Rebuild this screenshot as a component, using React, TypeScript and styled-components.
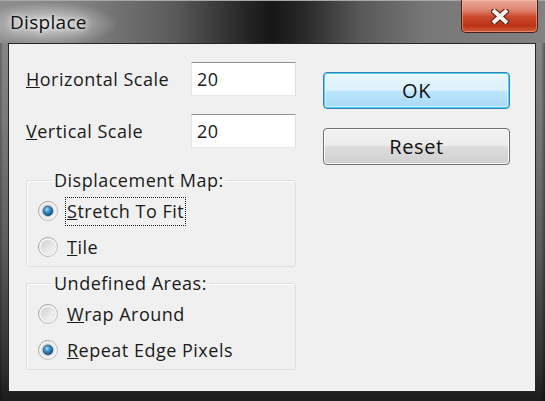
import React from "react";
import styled, { createGlobalStyle } from "styled-components";

const Global = createGlobalStyle`
  html, body { margin: 0; padding: 0; background: #2a2a2a; }
  body { font-family: "Open Sans", "Noto Sans", "DejaVu Sans", sans-serif; }
  * { box-sizing: border-box; }
`;

const Window = styled.div`
  width: 545px;
  height: 401px;
  display: flex;
  flex-direction: column;
  overflow: hidden;
  background:
    linear-gradient(to right, rgba(0,0,0,0.25) 0, rgba(0,0,0,0) 3px, rgba(0,0,0,0) calc(100% - 4px), rgba(0,0,0,0.35) 100%),
    linear-gradient(to bottom, #8c8c8c 0, #7a7a7a 30%, #5e5e5e 60%, #2e2e2e 92%, #1c1c1c 100%);
`;

const TitleBar = styled.div`
  height: 43px;
  flex: none;
  display: flex;
  align-items: flex-start;
  justify-content: space-between;
  padding: 0 7px 0 10px;
  border-top: 1px solid #a8a8a8;
  background:
    radial-gradient(ellipse 70px 22px at 48px 23px, rgba(235,235,235,0.75), rgba(235,235,235,0) 100%),
    linear-gradient(to right, #8e8e8e 0, #838383 14%, #5a5a5a 32%, #262626 45%, #161616 50%, #2a2a2a 56%, #585858 66%, #777 78%, #828282 100%);
`;

const Title = styled.div`
  margin-top: 8px;
  font-size: 19px;
  line-height: 26px;
  letter-spacing: 0.3px;
  color: #101010;
  text-shadow: 0 0 8px rgba(255,255,255,0.9), 0 0 4px rgba(255,255,255,0.8);
`;

const CloseButton = styled.div`
  width: 77px;
  height: 33px;
  margin-top: -1px;
  display: flex;
  align-items: center;
  justify-content: center;
  border: 1px solid #4a1e16;
  border-top: none;
  border-radius: 0 0 5px 5px;
  box-shadow: inset 0 0 0 1px rgba(255,200,180,0.45);
  background: linear-gradient(to bottom, #eaa898 0, #de8672 30%, #cb4a2e 52%, #bb3418 80%, #d4583a 100%);
`;

const Client = styled.div`
  flex: 1;
  margin: 0 9px 9px 8px;
  border: 1px solid #262626;
  background: #f0f0f0;
  display: grid;
  grid-template-columns: 270px 187px;
  column-gap: 27px;
  align-items: start;
  padding: 18px 0 0 17px;
  color: #1a1a1a;
  font-size: 18px;
  letter-spacing: 0.5px;
`;

const LeftColumn = styled.div`
  display: flex;
  flex-direction: column;
`;

const FieldRow = styled.div<{ $gap?: number }>`
  display: flex;
  align-items: center;
  justify-content: space-between;
  height: 34px;
  margin-bottom: ${(p) => p.$gap ?? 0}px;
`;

const Label = styled.span`
  line-height: 24px;
`;

const TextInput = styled.input`
  width: 105px;
  height: 34px;
  border: 1px solid #abadb3;
  border-top-color: #8e9096;
  border-left-color: #e2e3ea;
  border-right-color: #dbdfe6;
  border-bottom-color: #e3e9ef;
  background: #fff;
  font: inherit;
  font-size: 18px;
  letter-spacing: 0.5px;
  color: #1a1a1a;
  padding: 0 5px;
  outline: none;
`;

const Group = styled.fieldset<{ $top: number }>`
  margin: ${(p) => p.$top}px 0 0 0;
  padding: 1px 0 1px 11px;
  border: 1px solid #dcdfe2;
  border-radius: 3px;
  box-shadow: inset 1px 1px 0 #fff;
  min-width: 0;
`;

const Legend = styled.legend`
  margin-left: 13px;
  padding: 0 3px;
  line-height: 24px;
  font-size: 18px;
`;

const RadioRow = styled.div`
  height: 36px;
  display: flex;
  align-items: center;
  gap: 8px;
`;

const RadioText = styled.span<{ $focused?: boolean }>`
  line-height: 27px;
  padding: 0 1px;
  outline: ${(p) => (p.$focused ? "1px dotted #222" : "none")};
  outline-offset: 0;
`;

const RightColumn = styled.div`
  display: flex;
  flex-direction: column;
  gap: 19px;
  padding-top: 10px;
`;

const Button = styled.div<{ $default?: boolean }>`
  height: 37px;
  display: flex;
  align-items: center;
  justify-content: center;
  border-radius: 4px;
  font-size: 20px;
  letter-spacing: 0.6px;
  color: #111;
  border: 1px solid ${(p) => (p.$default ? "#3c7fb1" : "#707070")};
  box-shadow: ${(p) =>
    p.$default
      ? "inset 0 0 0 1px #48d3fa, inset 0 0 0 2px rgba(255,255,255,0.5)"
      : "inset 0 0 0 1px rgba(255,255,255,0.85)"};
  background: ${(p) =>
    p.$default
      ? "linear-gradient(to bottom, #eaf6fd 0, #d9f0fc 50%, #bee6fd 50%, #a7d9f5 100%)"
      : "linear-gradient(to bottom, #f2f2f2 0, #ebebeb 50%, #dddddd 50%, #cfcfcf 100%)"};
`;

const Radio = ({ checked, id }: { checked?: boolean; id: string }) => (
  <svg width="20" height="20" viewBox="0 0 20 20" style={{ flex: "none" }}>
    <defs>
      <linearGradient id={`ring-${id}`} x1="0" y1="0" x2="1" y2="1">
        <stop offset="0" stopColor="#9a9a9a" />
        <stop offset="1" stopColor="#c9c9c9" />
      </linearGradient>
      <linearGradient id={`in-${id}`} x1="0" y1="0" x2="1" y2="1">
        <stop offset="0" stopColor="#cfcfcf" />
        <stop offset="1" stopColor="#fafafa" />
      </linearGradient>
      <radialGradient id={`dot-${id}`} cx="0.4" cy="0.35" r="0.65">
        <stop offset="0" stopColor="#9fdcf8" />
        <stop offset="0.45" stopColor="#3a8ec6" />
        <stop offset="1" stopColor="#144e7e" />
      </radialGradient>
    </defs>
    <circle cx="10" cy="10" r="9.5" fill="#f4f4f4" stroke={`url(#ring-${id})`} strokeWidth="1" />
    <circle cx="10" cy="10" r="7" fill={`url(#in-${id})`} stroke="#e6e6e6" strokeWidth="0.8" />
    {checked && <circle cx="10" cy="10" r="5" fill={`url(#dot-${id})`} stroke="#1c4c72" strokeWidth="0.6" />}
  </svg>
);

const CloseGlyph = () => (
  <svg width="18" height="15" viewBox="0 0 18 15">
    <path d="M3.5 2.5 L14.5 12.5 M14.5 2.5 L3.5 12.5" stroke="#5a2418" strokeWidth="6.4" strokeLinecap="square" />
    <path d="M3.5 2.5 L14.5 12.5 M14.5 2.5 L3.5 12.5" stroke="#fbf3f0" strokeWidth="4" strokeLinecap="square" />
  </svg>
);

export default function App() {
  return (
    <>
      <Global />
      <Window>
        <TitleBar>
          <Title>Displace</Title>
          <CloseButton>
            <CloseGlyph />
          </CloseButton>
        </TitleBar>
        <Client>
          <LeftColumn>
            <FieldRow $gap={18}>
              <Label>
                <u>H</u>orizontal Scale
              </Label>
              <TextInput defaultValue="20" />
            </FieldRow>
            <FieldRow>
              <Label>
                <u>V</u>ertical Scale
              </Label>
              <TextInput defaultValue="20" />
            </FieldRow>
            <Group $top={20}>
              <Legend>Displacement Map:</Legend>
              <RadioRow>
                <Radio checked id="a" />
                <RadioText $focused>
                  <u>S</u>tretch To Fit
                </RadioText>
              </RadioRow>
              <RadioRow>
                <Radio id="b" />
                <RadioText>
                  <u>T</u>ile
                </RadioText>
              </RadioRow>
            </Group>
            <Group $top={4}>
              <Legend>Undefined Areas:</Legend>
              <RadioRow>
                <Radio id="c" />
                <RadioText>
                  <u>W</u>rap Around
                </RadioText>
              </RadioRow>
              <RadioRow>
                <Radio checked id="d" />
                <RadioText>
                  <u>R</u>epeat Edge Pixels
                </RadioText>
              </RadioRow>
            </Group>
          </LeftColumn>
          <RightColumn>
            <Button $default>OK</Button>
            <Button>Reset</Button>
          </RightColumn>
        </Client>
      </Window>
    </>
  );
}
